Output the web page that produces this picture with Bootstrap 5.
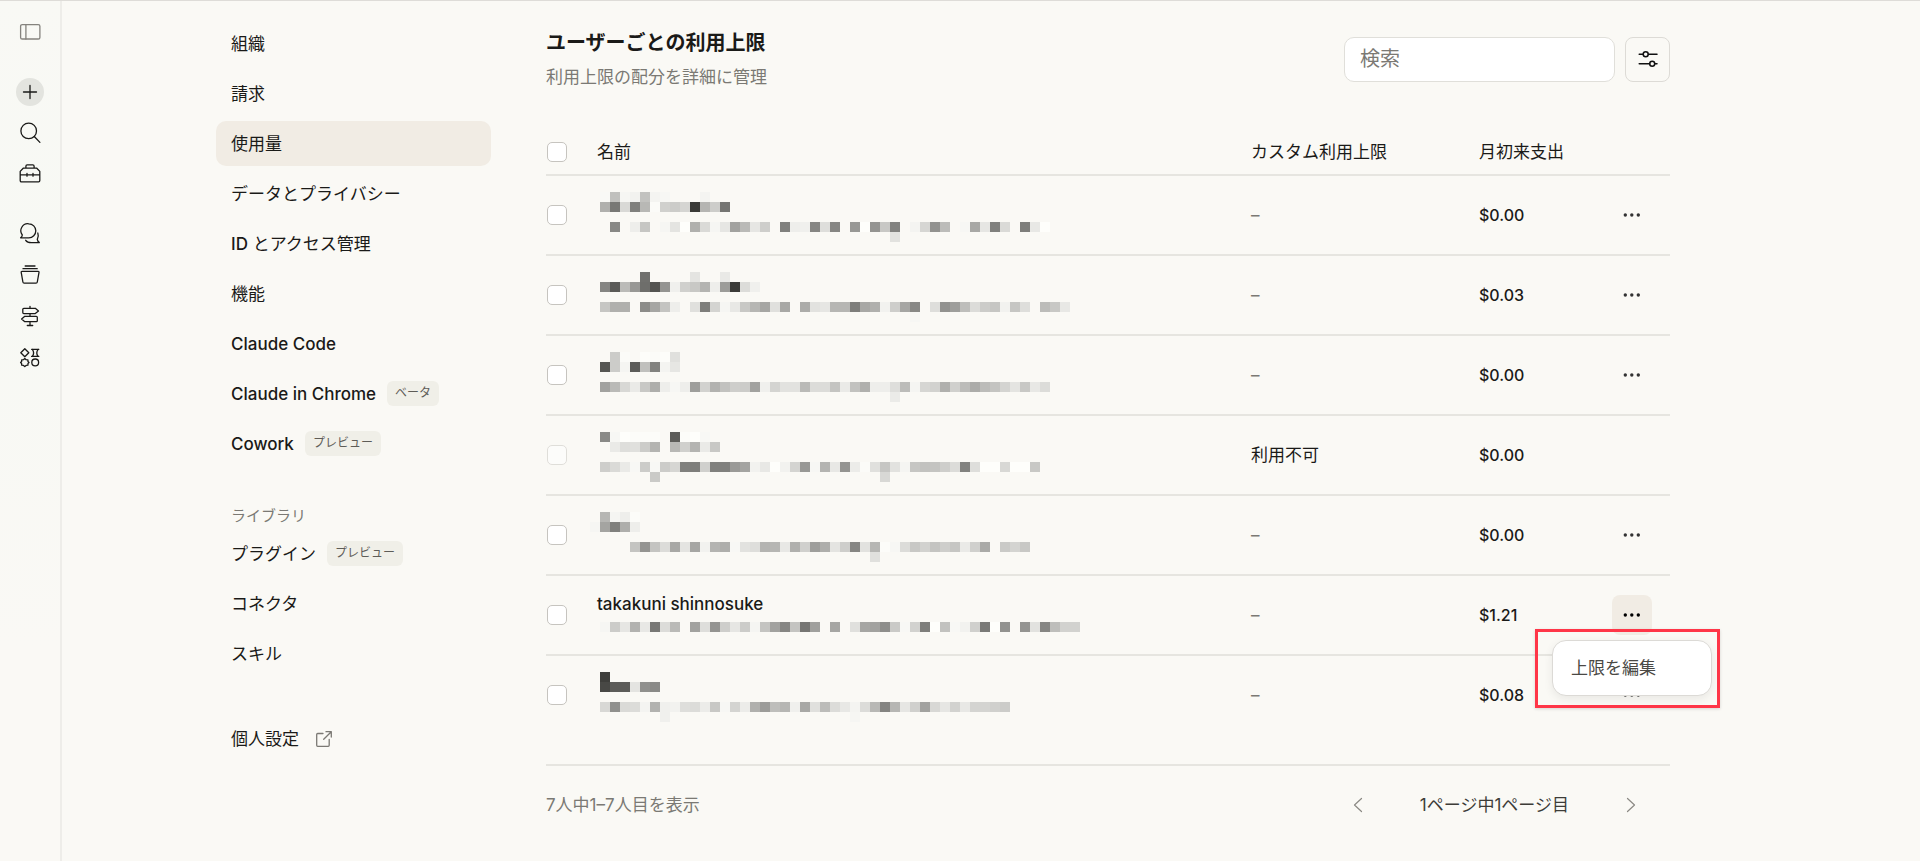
<!DOCTYPE html>
<html lang="ja">
<head>
<meta charset="utf-8">
<meta name="viewport" content="width=device-width, initial-scale=1">
<title>ユーザーごとの利用上限</title>
<link href="https://cdn.jsdelivr.net/npm/bootstrap@5.3.0/dist/css/bootstrap.min.css" rel="stylesheet">
<style>
  :root { --ink:#1a1a18; --soft:#7b7974; --line:#e6e5e0; --page:#faf9f5; --tint:#f1ece4; }
  body { background:var(--page); color:var(--ink); font-family:Inter,"Noto Sans CJK JP",sans-serif; font-size:17px; line-height:24px; }
  svg { display:block; fill:none; stroke:currentColor; stroke-linecap:round; stroke-linejoin:round; }
  .app { border-top:1px solid #dedcd8; }
  .rail { width:62px; border-right:2px solid #eeede9; padding-top:10px; background:linear-gradient(#f9f9f5,#f7f9f4 30%,#faf9f5 75%); }
  .rail-btn { width:41px; height:41px; border:0; padding:0; background:none; color:var(--ink); display:grid; place-items:center; }
  .rail-btn svg { width:24px; height:24px; stroke-width:1.3; }
  .rail-toggle { color:#85837e; }
  .rail-gap { margin-top:19px; }
  .plus-disc { width:28px; height:28px; border-radius:50%; background:#e3e4df; display:grid; place-items:center; }
  .shell { max-width:1550px; padding-right:96px; gap:55px; }
  .side { width:275px; padding-top:20px; }
  .side .nav { gap:5px; }
  .side .nav-link { height:45px; padding:0 15px; border-radius:10px; color:var(--ink); display:flex; align-items:center; }
  .side .nav-link.active { background:var(--tint); }
  .side-label { height:30px; margin-top:35px; padding:0 15px; font-size:15px; line-height:30px; color:var(--soft); }
  .latin { font-weight:500; }
  .tag { height:25px; margin-left:11px; padding:0 8px; border-radius:6px; background:#f0efe8; color:#5e5c57; font-size:12px; font-weight:400; line-height:24px; }
  .panel { padding-top:28px; }
  .panel h1 { font-size:20px; line-height:28px; font-weight:600; margin-bottom:8px; }
  .muted { color:var(--soft); }
  .tools { gap:10px; }
  .search-box { width:271px; height:45px; border:1px solid #e0dfda; border-radius:10px; padding:0 15px; font-size:20px; background:#fff; }
  .search-box::placeholder { color:#7b7974; }
  .filter-btn { width:45px; height:45px; border:1px solid #dddbd6; border-radius:8px; background:none; padding:0; display:grid; place-items:center; color:#111; }
  .limits { table-layout:fixed; border-collapse:separate; border-spacing:0; width:100%; margin-top:41px; }
  .limits td { height:80px; padding:0; border-bottom:2px solid var(--line); vertical-align:middle; }
  .limits tr:last-child td { height:78px; border-bottom:0; }
  .limits th { height:46px; padding:0; font-weight:400; border-bottom:2px solid var(--line); }
  .limits .form-check-input { display:block; width:20px; height:20px; margin:0 0 0 1px; border:1px solid #c6c4bf; border-radius:5px; background-color:#fff; }
  .limits .form-check-input:disabled { opacity:.5; }
  .col-pick { width:51px; } .col-cap { width:228px; } .col-spend { width:133px; } .col-act { width:58px; }
  .money { font-size:16px; font-weight:500; }
  .mosaic { overflow:visible; stroke:none; shape-rendering:crispEdges; width:483px; }
  .dots-btn { width:40px; height:40px; border:0; border-radius:8px; padding:0; background:none; display:grid; place-items:center; color:#333; }
  .dots-btn.open { background:var(--tint); color:#000; }
  .dots-btn svg { fill:currentColor; stroke:none; }
  .callout { position:absolute; z-index:2; top:34px; right:-50px; width:185px; border:3px solid #ff3648; padding:8px 5px 9px 14px; box-shadow:0 1px 3px rgba(0,0,0,.15); }
  .edit-menu { height:56px; border:1px solid #dcdad6; border-radius:14px; background:#fff; box-shadow:0 3px 10px rgba(0,0,0,.07); }
  .edit-menu button { width:100%; height:54px; border:0; background:none; padding:0 18px; text-align:left; color:#4a4945; }
  .foot { margin-top:30px; border-top:2px solid var(--line); padding-top:19px; }
  .pager { gap:42px; margin-right:19px; color:#3d3c38; }
  .pager button { width:40px; height:40px; border:0; padding:0; background:none; display:grid; place-items:center; color:#8b8984; }
</style>
</head>
<body>
<div class="app d-flex min-vh-100">
  <aside class="rail d-flex flex-column align-items-center flex-shrink-0">
    <button class="rail-btn rail-toggle" aria-label="サイドバー"><svg viewBox="0 0 24 24"><rect x="2.6" y="4.6" width="19.3" height="14.4" rx="1.6"/><path d="M7.9 4.600v14.4"/></svg></button>
    <button class="rail-btn rail-gap" aria-label="新規"><span class="plus-disc"><svg viewBox="0 0 24 24"><path d="M12 5.500v13M5.500 12h13"/></svg></span></button>
    <button class="rail-btn" aria-label="検索"><svg viewBox="0 0 24 24"><circle cx="10.700" cy="9.900" r="7.800"/><path d="M16.300 15.500l5.600 5.900"/></svg></button>
    <button class="rail-btn" aria-label="ツール"><svg viewBox="0 0 24 24"><path d="M7.900 6.200V4.200a1.300 1.300 0 0 1 1.300-1.300h5.600a1.300 1.300 0 0 1 1.300 1.300v2M5.200 6.200h13.600l3 3.200v9.200a1.200 1.200 0 0 1-1.200 1.200H3.400a1.200 1.200 0 0 1-1.200-1.200V9.400zM2.200 12.800h19.600M9 11.400v2.800M15 11.400v2.800"/></svg></button>
    <button class="rail-btn rail-gap" aria-label="チャット"><svg viewBox="0 0 24 24"><path d="M10.800 1.800a7 7 0 0 1 0 14H2.600c1.100-.7 1.700-1.600 1.700-2.800A7 7 0 0 1 10.800 1.800zM19.800 11c.8 2.200.7 4.300-.5 6.300.2 1.300.9 2.400 2 3.300h-8c-2.600 0-4.500-.7-5.600-2.300"/></svg></button>
    <button class="rail-btn" aria-label="プロジェクト"><svg viewBox="0 0 24 24"><path d="M7.200 3h9.800M5 5.700h14.200M4 8.400h16.200a.8.800 0 0 1 .8 1l-1.700 9.600a1.300 1.300 0 0 1-1.300 1.100H6.200a1.300 1.300 0 0 1-1.300-1.100L3.200 9.400a.8.800 0 0 1 .8-1z"/></svg></button>
    <button class="rail-btn" aria-label="ガイド"><svg viewBox="0 0 24 24"><path d="M12 2.300v2M12 9.600v2.700M12 17.700v3.800M9.300 21.500h5.400M5.800 4.300h11.500l3.200 2.700-3.200 2.600H5.800a1 1 0 0 1-1-1V5.300a1 1 0 0 1 1-1zM18.300 12.300H6.800L3.600 15l3.200 2.700h11.500a1 1 0 0 0 1-1v-3.400a1 1 0 0 0-1-1z"/></svg></button>
    <button class="rail-btn" aria-label="アプリ"><svg viewBox="0 0 24 24"><path d="M6.800 3.800l4 4-4 4-4-4zM13.600 4.300h7.200M13.600 11.400h7.200M14.300 4.300c1.700 2.300 1.700 4.800 0 7.100M20.100 4.300c-1.700 2.300-1.700 4.800 0 7.100M6.800 13.600l1.300 1.100 1.800.2.100 1.700 1 .9-1 1-.1 1.700-1.800.2-1.300 1.100-1.300-1.100-1.800-.2-.1-1.700-1-1 1-.9.100-1.700 1.800-.2z"/><circle cx="17.200" cy="17.400" r="3.400"/></svg></button>
  </aside>

  <main class="flex-grow-1">
    <div class="shell d-flex mx-auto">
      <nav class="side flex-shrink-0" aria-label="設定">
        <div class="nav flex-column">
          <a class="nav-link" href="#">組織</a>
          <a class="nav-link" href="#">請求</a>
          <a class="nav-link active" href="#" aria-current="page">使用量</a>
          <a class="nav-link" href="#">データとプライバシー</a>
          <a class="nav-link" href="#"><span><span class="latin">ID</span> とアクセス管理</span></a>
          <a class="nav-link" href="#">機能</a>
          <a class="nav-link latin" href="#">Claude Code</a>
          <a class="nav-link latin" href="#">Claude in Chrome<span class="tag">ベータ</span></a>
          <a class="nav-link latin" href="#">Cowork<span class="tag">プレビュー</span></a>
        </div>
        <div class="side-label">ライブラリ</div>
        <div class="nav flex-column">
          <a class="nav-link" href="#">プラグイン<span class="tag">プレビュー</span></a>
          <a class="nav-link" href="#">コネクタ</a>
          <a class="nav-link" href="#">スキル</a>
        </div>
        <div class="nav flex-column mt-4 pt-3">
          <a class="nav-link" href="#">個人設定<svg class="ms-3 muted" width="18" height="18" viewBox="0 0 18 18" stroke-width="1.300"><path d="M8 3.500H2.700a1 1 0 0 0-1 1v10.800a1 1 0 0 0 1 1h10.500a1 1 0 0 0 1-1V9.500M11 1.700h5.300V7M16.300 1.700L8.700 9.300"/></svg></a>
        </div>
      </nav>

      <section class="panel flex-grow-1">
        <header class="d-flex align-items-center justify-content-between">
          <div>
            <h1>ユーザーごとの利用上限</h1>
            <div class="muted">利用上限の配分を詳細に管理</div>
          </div>
          <div class="tools d-flex">
            <input class="search-box" type="search" placeholder="検索" aria-label="検索">
            <button class="filter-btn" aria-label="絞り込み"><svg width="20" height="20" viewBox="0 0 20 20" stroke-width="1.500"><path d="M1.200 5.300h3.800M10.500 5.300h8.500M1.200 14.700h10.500M17 14.700h2"/><circle cx="7.700" cy="5.300" r="2.500"/><circle cx="14.200" cy="14.700" r="2.500"/></svg></button>
          </div>
        </header>

        <table class="limits">
          <colgroup><col class="col-pick"><col><col class="col-cap"><col class="col-spend"><col class="col-act"></colgroup>
          <thead><tr>
            <th><input class="form-check-input" type="checkbox" aria-label="すべて選択"></th>
            <th scope="col">名前</th><th scope="col">カスタム利用上限</th><th scope="col">月初来支出</th><th></th>
          </tr></thead>
          <tbody id="people"></tbody>
        </table>

        <div class="foot d-flex align-items-center justify-content-between">
          <div class="muted">7人中1–7人目を表示</div>
          <div class="pager d-flex align-items-center">
            <button aria-label="前のページ"><svg width="10" height="16" viewBox="0 0 10 16" stroke-width="1.200"><path d="M8.500 1.500L1.500 8l7 6.500"/></svg></button>
            <span>1ページ中1ページ目</span>
            <button aria-label="次のページ"><svg width="10" height="16" viewBox="0 0 10 16" stroke-width="1.200"><path d="M1.500 1.500l7 6.500-7 6.500"/></svg></button>
          </div>
        </div>
      </section>
    </div>
  </main>
</div>

<script src="https://cdn.jsdelivr.net/npm/bootstrap@5.3.0/dist/js/bootstrap.bundle.min.js"></script>
<script>
// Redacted names: each band is [top, first column, grey levels of the 10px cells]; "--" leaves a cell empty.
const people = [
  { spend: '$0.00', bands: [
    [0, 0, 'f9 c0 f6 f2 c2 f4 f7 -- -- -- f4'],
    [10, 0, 'b0 78 d9 80 b8 fb d0 cc d5 3a b5 cd 75'],
    [30, 0, '-- 88 -- ee c6 -- f6 e4 fe b0 da f6 e6 a2 ba e6 ce -- 80 ee f0 86 de 86 -- 98 fe 94 c8 82 -- f4 d6 92 bc -- f7 a8 e6 80 da -- 7e e8 fe'],
    [40, 29, 'e2']] },
  { spend: '$0.03', bands: [
    [0, 4, '70 -- -- -- -- e4 -- -- e9'],
    [10, 0, '85 5a bb 98 6e 54 94 f0 d0 c8 b4 ee 9c 3b dc f0'],
    [30, 0, 'c6 b0 b0 -- 8c a6 c4 ee -- e0 7e d4 f6 e8 c8 b6 a6 e0 a8 -- ac e2 e6 b6 b6 7e a8 b0 f2 ce a6 88 -- de 92 9e be dc cc c6 f2 c6 de -- bc c8 e8'],
    [40, 31, 'f7']] },
  { spend: '$0.00', bands: [
    [0, 1, 'cc fb -- fd fb fd e0'],
    [10, 0, '56 cc f5 5c c0 82 f4 e6'],
    [30, 0, 'a2 ba d8 ea c8 ae ee f7 ee 9e d2 b2 c2 ce cc a2 f0 d4 e2 e2 ba dc dc c4 ea c2 b0 ee ee de bc f5 d6 d2 b0 d0 bc ac bc c4 d4 e4 c8 e8 dc'],
    [40, 29, 'eb']] },
  { spend: '$0.00', blocked: true, bands: [
    [0, 0, '8a f7 fe fc fc fc -- 5c fc fe f8'],
    [10, 1, 'ea de e0 cc b4 -- b8 d0 b4 ea c8'],
    [30, 0, 'ce da ea f8 cc f8 cc d6 80 7e d0 80 80 9a a4 f2 e8 fe f2 d4 98 f7 b4 e8 94 ec fb e0 c6 e2 f5 c6 c2 c4 ce dc 82 de fe fe d8 fe fe c8'],
    [40, 5, 'ca'], [40, 28, 'd8']] },
  { spend: '$0.00', bands: [
    [0, 0, 'b6 f5 ee fc'],
    [10, -1, 'f6 a4 80 ae ee'],
    [30, 3, 'c4 94 c4 dc a8 e4 a6 f2 b4 ae f8 e2 de b4 b6 e8 b0 d0 9e ae e4 ce 86 e2 b6 fc f7 dc c8 d2 c4 ce c6 ea d0 aa -- ca d4 c8'],
    [40, 27, 'e0']] },
  { spend: '$1.21', name: 'takakuni shinnosuke', open: true, bands: [
    [6, 0, 'f6 cc e6 b2 e8 78 dc ba -- a2 de 94 ce e6 cc f5 c4 a2 86 c4 76 a0 -- a6 -- e0 a6 a2 8e ca f8 d2 7e fe c2 f8 f2 d0 7a fe 92 -- 94 e2 86 be d2 d2']] },
  { spend: '$0.08', bands: [
    [0, 0, '3e'],
    [10, 0, '48 5c 5c e4 90 8a'],
    [30, 0, 'd8 90 da dc f4 b2 f0 f2 de dc ec c8 f7 d4 ec b0 9c be b6 f0 a8 e0 bc dc e8 f4 dc b8 84 b6 e6 d0 a2 d8 e6 d2 e8 d4 d4 d0 cc'],
    [40, 6, 'f0'], [40, 25, 'f6']] }
];

function mosaic(bands, height) {
  const cells = bands.flatMap(([top, first, levels]) => levels.split(' ').map((g, i) => {
    if (g === '--') return '';
    const v = parseInt(g, 16);
    return `<rect x="${(first + i) * 10}" y="${top}" width="10" height="10" fill="rgb(${v},${v},${v - 3})"/>`;
  })).join('');
  return `<svg class="mosaic" height="${height}" viewBox="-3 0 483 ${height}" aria-hidden="true">${cells}</svg>`;
}

const menu = '<div class="callout"><div class="edit-menu" role="menu"><button role="menuitem">上限を編集</button></div></div>';

document.getElementById('people').innerHTML = people.map((p, n) => `
  <tr>
    <td><input class="form-check-input" type="checkbox" aria-label="ユーザー ${n + 1} を選択" ${p.blocked ? 'disabled' : ''}></td>
    <td>${p.name ? `<div class="latin">${p.name}</div>${mosaic(p.bands, 22)}` : mosaic(p.bands, 46)}</td>
    <td>${p.blocked ? '利用不可' : '<span class="muted latin">–</span>'}</td>
    <td class="money">${p.spend}</td>
    <td>${p.blocked ? '' : `<div class="position-relative">
      <button class="dots-btn ${p.open ? 'open' : ''}" aria-label="操作"><svg width="20" height="6" viewBox="0 0 20 6"><circle cx="3.300" cy="3" r="1.700"/><circle cx="9.800" cy="3" r="1.700"/><circle cx="16.300" cy="3" r="1.700"/></svg></button>
      ${p.open ? menu : ''}</div>`}</td>
  </tr>`).join('');
</script>
</body>
</html>
